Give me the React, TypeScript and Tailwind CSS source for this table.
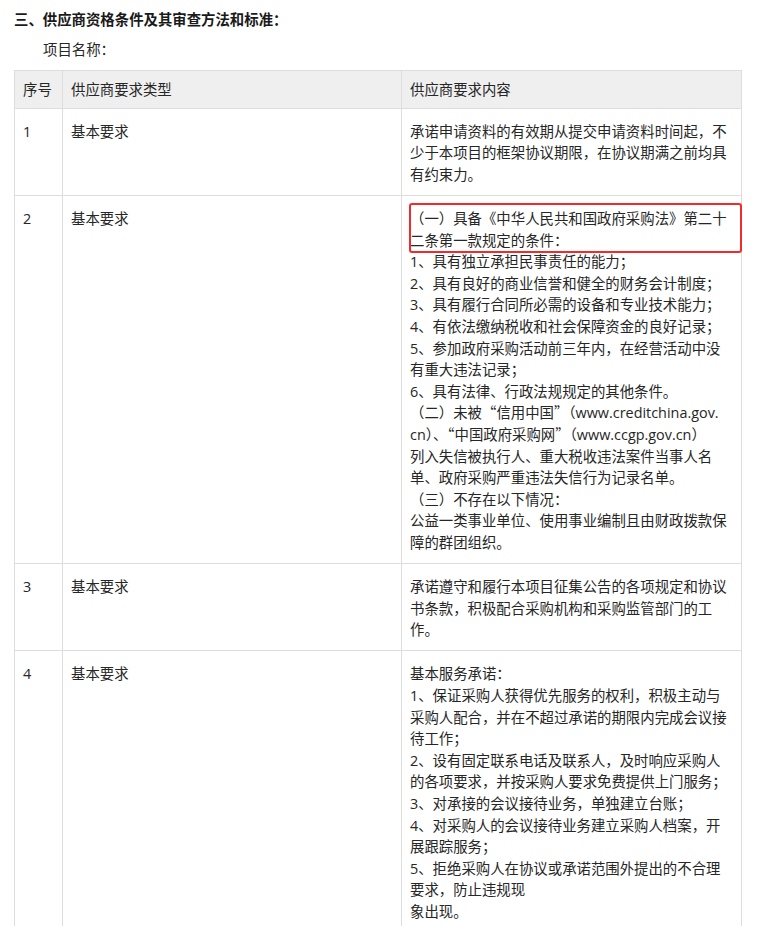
const rows: { no: string; type: string; lines: string[]; marked?: number }[] = [
  {
    no: "1",
    type: "基本要求",
    lines: [
      "承诺申请资料的有效期从提交申请资料时间起，不",
      "少于本项目的框架协议期限，在协议期满之前均具",
      "有约束力。",
    ],
  },
  {
    no: "2",
    type: "基本要求",
    marked: 2,
    lines: [
      "（一）具备《中华人民共和国政府采购法》第二十",
      "二条第一款规定的条件：",
      "1、具有独立承担民事责任的能力；",
      "2、具有良好的商业信誉和健全的财务会计制度；",
      "3、具有履行合同所必需的设备和专业技术能力；",
      "4、有依法缴纳税收和社会保障资金的良好记录；",
      "5、参加政府采购活动前三年内，在经营活动中没",
      "有重大违法记录；",
      "6、具有法律、行政法规规定的其他条件。",
      "（二）未被“信用中国”（www.creditchina.gov.",
      "cn）、“中国政府采购网”（www.ccgp.gov.cn）",
      "列入失信被执行人、重大税收违法案件当事人名",
      "单、政府采购严重违法失信行为记录名单。",
      "（三）不存在以下情况：",
      "公益一类事业单位、使用事业编制且由财政拨款保",
      "障的群团组织。",
    ],
  },
  {
    no: "3",
    type: "基本要求",
    lines: [
      "承诺遵守和履行本项目征集公告的各项规定和协议",
      "书条款，积极配合采购机构和采购监管部门的工",
      "作。",
    ],
  },
  {
    no: "4",
    type: "基本要求",
    lines: [
      "基本服务承诺：",
      "1、保证采购人获得优先服务的权利，积极主动与",
      "采购人配合，并在不超过承诺的期限内完成会议接",
      "待工作；",
      "2、设有固定联系电话及联系人，及时响应采购人",
      "的各项要求，并按采购人要求免费提供上门服务；",
      "3、对承接的会议接待业务，单独建立台账；",
      "4、对采购人的会议接待业务建立采购人档案，开",
      "展跟踪服务；",
      "5、拒绝采购人在协议或承诺范围外提出的不合理",
      "要求，防止违规现",
      "象出现。",
    ],
  },
];

// curly quotes should take the wide CJK form, like the rest of the punctuation
function Line({ text }: { text: string }) {
  const parts = text.split(/([“”])/);
  return (
    <div className="h-[21.6px] whitespace-nowrap">
      {parts.map((p, i) =>
        p === "“" || p === "”" ? (
          <span key={i} className="font-['Noto_Sans_CJK_SC',sans-serif] leading-none">
            {p}
          </span>
        ) : (
          p
        )
      )}
    </div>
  );
}

function Lines({ lines }: { lines: string[] }) {
  return (
    <>
      {lines.map((l, i) => (
        <Line key={i} text={l} />
      ))}
    </>
  );
}

export default function App() {
  return (
    <div className="min-h-screen bg-white pt-[9px] pl-[14px] font-['Open_Sans','Noto_Sans_CJK_SC',sans-serif] text-[14.4px] leading-[21.6px] text-[#262626]">
      {/* Section title */}
      <p className="font-bold text-[#1a1a1a]">三、供应商资格条件及其审查方法和标准：</p>
      <p className="mt-[8px] pl-[29px]">项目名称：</p>

      <table className="mt-[10px] w-[727px] table-fixed border-collapse">
        <colgroup>
          <col className="w-[48px]" />
          <col className="w-[339px]" />
          <col className="w-[340px]" />
        </colgroup>
        <thead>
          <tr className="bg-[#efefef]">
            <th className="border border-[#dddddd] px-[8px] pt-[8px] pb-[7px] text-left font-normal">序号</th>
            <th className="border border-[#dddddd] px-[8px] pt-[8px] pb-[7px] text-left font-normal">供应商要求类型</th>
            <th className="border border-[#dddddd] px-[8px] pt-[8px] pb-[7px] text-left font-normal">供应商要求内容</th>
          </tr>
        </thead>
        <tbody>
          {rows.map((r) => (
            <tr key={r.no}>
              <td className="border border-[#dddddd] px-[8px] pt-[12px] pb-[9.5px] align-top">{r.no}</td>
              <td className="border border-[#dddddd] px-[8px] pt-[12px] pb-[9.5px] align-top">{r.type}</td>
              <td className="border border-[#dddddd] px-[8px] pt-[12px] pb-[9.5px] align-top">
                {r.marked ? (
                  <>
                    <div className="relative">
                      <Lines lines={r.lines.slice(0, r.marked)} />
                      {/* red highlight box */}
                      <span className="absolute -top-[5px] -bottom-[2px] -left-[1px] -right-[9px] rounded-[3px] border-2 border-[#f42a2a]" />
                    </div>
                    <Lines lines={r.lines.slice(r.marked)} />
                  </>
                ) : (
                  <Lines lines={r.lines} />
                )}
              </td>
            </tr>
          ))}
        </tbody>
      </table>
    </div>
  );
}
